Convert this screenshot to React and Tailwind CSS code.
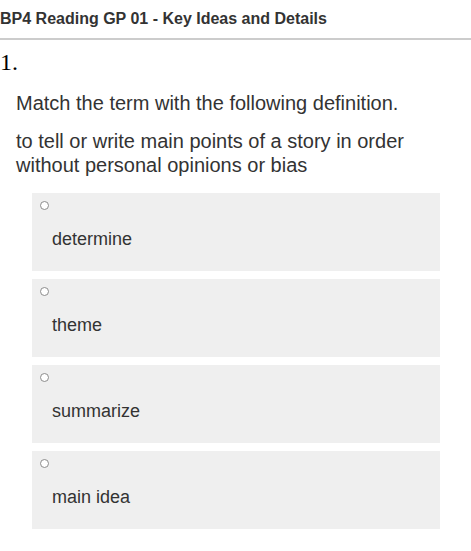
export default function App() {
  const options = ["determine", "theme", "summarize", "main idea"];
  return (
    <div className="w-[471px] h-[551px] bg-white overflow-hidden" style={{ fontFamily: '"Liberation Sans", Arial, sans-serif' }}>
      <div className="h-[40px] flex items-center border-b-2 border-[#cccccc]">
        <span className="text-[16px] font-bold text-[#333333] leading-none">BP4 Reading GP 01 - Key Ideas and Details</span>
      </div>
      <div className="mt-[10px] text-[24px] leading-[24px] text-black" style={{ fontFamily: '"Liberation Serif", "Times New Roman", serif' }}>1.</div>
      <div className="pl-4 pr-4 text-[#333333]">
        <p className="text-[20px] leading-[24px] mt-[17px]">Match the term with the following definition.</p>
        <p className="text-[20px] leading-[24px] mt-[14px]">to tell or write main points of a story in order without personal opinions or bias</p>
      </div>
      <div className="pl-[32px] pr-[31px] mt-[16px] flex flex-col gap-[8px]">
        {options.map((o) => (
          <div key={o} className="h-[78px] bg-[#efefef] pt-[8px] pl-[8px]">
            <span className="block w-[9px] h-[9px] rounded-full border border-[#8c8c8c] bg-white"></span>
            <div className="pl-[12px] mt-[19px] text-[18px] leading-[20px] text-[#333333]">{o}</div>
          </div>
        ))}
      </div>
    </div>
  );
}
